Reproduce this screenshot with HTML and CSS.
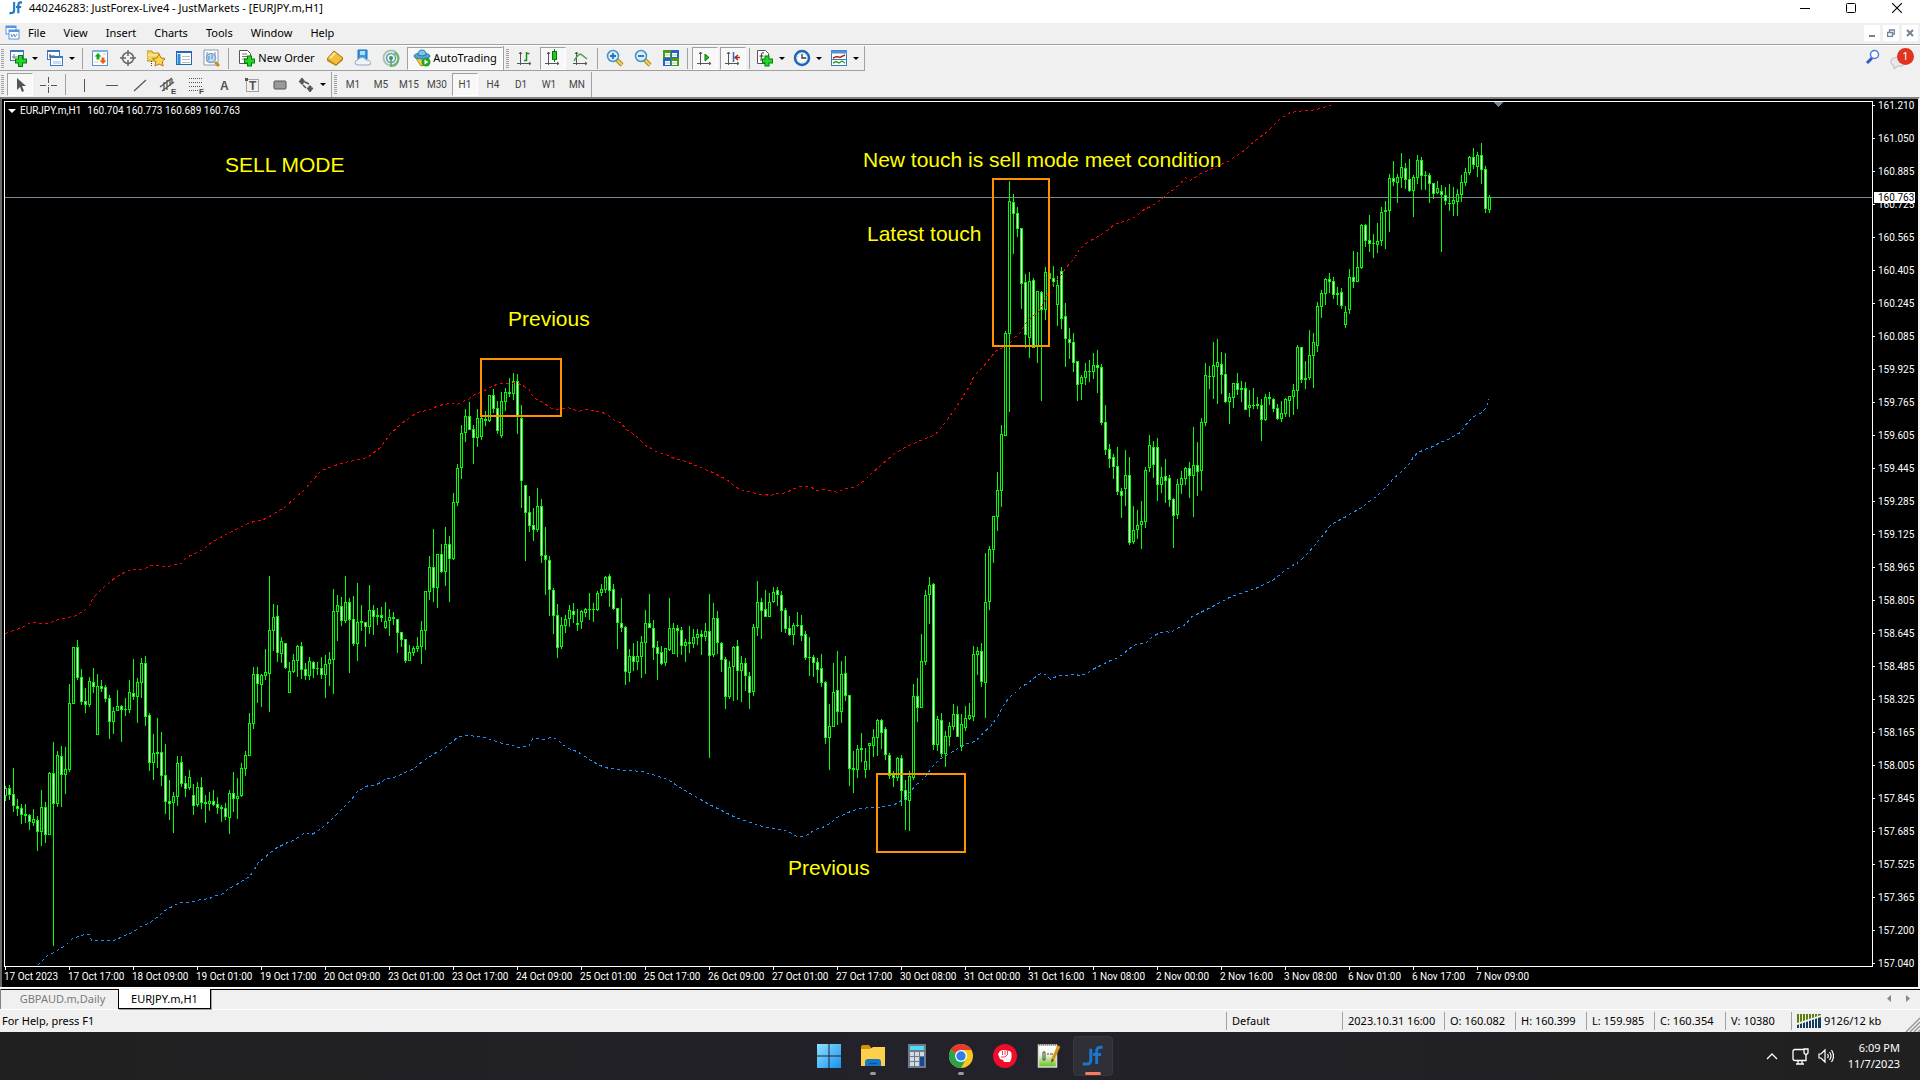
FILE: index.html
```html
<!DOCTYPE html>
<html lang="en">
<head>
<meta charset="utf-8">
<title>440246283: JustForex-Live4 - JustMarkets - [EURJPY.m,H1]</title>
<link rel="stylesheet" href="styles.css">
</head>
<body>
<header class="titlebar">
  <svg class="logo" width="14" height="14" viewBox="0 0 30 28"><path d="M11 1v18q0 6-6 6H1M28 2h-3q-5 0-5 6v17M15 12h11" fill="none" stroke="#1d78c8" stroke-width="4.5"/></svg>
  <h1>440246283: JustForex-Live4 - JustMarkets - [EURJPY.m,H1]</h1>
  <div class="window-controls">
    <button aria-label="Minimize"><svg width="10" height="10"><path d="M0 5.5h10" stroke="#000"/></svg></button>
    <button aria-label="Maximize"><svg width="10" height="10"><rect x=".5" y=".5" width="9" height="9" fill="none" stroke="#000" rx="1"/></svg></button>
    <button aria-label="Close"><svg width="10" height="10"><path d="M0 0l10 10M10 0L0 10" stroke="#000" stroke-width="1.1"/></svg></button>
  </div>
</header>

<nav class="menubar">
  <svg class="menu-icon" width="15" height="15"><rect x="1" y="1" width="10" height="8" fill="#fff" stroke="#5b93dc"/><rect x="4" y="5" width="10" height="9" fill="#fff" stroke="#5b93dc"/><path d="M1 2h10M4 6h10" stroke="#5b93dc" stroke-width="2"/><path d="M6 9l1 3 2-3 1 3 2-3" fill="none" stroke="#5b93dc"/></svg>
  <button>File</button><button>View</button><button>Insert</button><button>Charts</button><button>Tools</button><button>Window</button><button>Help</button>
  <div class="mdi-controls">
    <button aria-label="Minimize chart"><svg width="8" height="8"><path d="M1 7h6" stroke="#70839a" stroke-width="2"/></svg></button>
    <button aria-label="Restore chart"><svg width="8" height="8"><path d="M2.500 3V1H7.500V5H6M0 3.500H5.500V7.500H.5V3" fill="none" stroke="#70839a" stroke-width="1.400"/></svg></button>
    <button aria-label="Close chart"><svg width="8" height="8"><path d="M1 1l6 6M7 1L1 7" stroke="#70839a" stroke-width="2"/></svg></button>
  </div>
</nav>

<div class="toolbar">
  <div class="bar-group">
    <i class="grip"></i>
    <button class="tool drop" aria-label="New chart"><svg width="18" height="18"><rect x="1.500" y="1.500" width="13" height="10" fill="#fff" stroke="#3b78c0"/><path d="M1 2h14" stroke="#3b78c0" stroke-width="2"/><path d="M5 5v5M3 8h8M10 6v4" stroke="#777"/><path d="M11.500 6v12M6 12h12" stroke="#087a0a" stroke-width="5"/><path d="M11.500 7v10M7 12h10" stroke="#21d727" stroke-width="3"/></svg><i class="arrow"></i></button>
    <button class="tool drop" aria-label="Profiles"><svg width="18" height="18"><rect x="1.500" y="1.500" width="12" height="9" fill="#fff" stroke="#3b78c0"/><path d="M1 2h13" stroke="#3b78c0" stroke-width="2"/><path d="M4 5v4M3 7h6" stroke="#555"/><rect x="4.500" y="7.500" width="12" height="9" fill="#fff" stroke="#3b78c0"/><path d="M4 8h13" stroke="#3b78c0" stroke-width="2"/><rect x="7" y="12" width="8" height="3" fill="#c4dcf5"/></svg><i class="arrow"></i></button>
    <i class="sep"></i>
    <button class="tool" aria-label="Market Watch"><svg width="18" height="18"><rect x="1.500" y="1.500" width="15" height="15" fill="#fff" stroke="#5b93cb"/><path d="M1 2h16" stroke="#7fb2e6" stroke-width="2"/><path d="M7 4l3.500 3.500H8.500v3H5.500v-3H3.500z" fill="#17a91c"/><path d="M12 15l-3.500-3.500h2v-3h3v3h2z" fill="#f05a14"/><path d="M12 5h3M3 13h4" stroke="#ccc"/></svg></button>
    <button class="tool" aria-label="Data Window"><svg width="18" height="18"><circle cx="9" cy="9" r="5.500" fill="none" stroke="#666" stroke-width="1.500"/><path d="M9 1v6M9 11v6M1 9h6M11 9h6" stroke="#666" stroke-width="1.500"/></svg></button>
    <button class="tool" aria-label="Navigator"><svg width="18" height="18"><path d="M0 2h5l1 2h6v8H0z" fill="#f6d35b" stroke="#b89226"/><path d="M1 6h11" stroke="#fff3b5"/><path d="M4.500 12v5" stroke="#444" stroke-dasharray="1 1"/><path d="M12 5l2 4 4.500.5-3.300 3 1 4.500L12 15l-4 2 .8-4.500-3.300-3L10 9z" fill="#ffd64a" stroke="#b37a12"/></svg></button>
    <button class="tool" aria-label="Terminal"><svg width="18" height="18"><rect x="1.500" y="2.500" width="15" height="13" fill="#fff" stroke="#1f69b5"/><path d="M1 3h16" stroke="#1f69b5" stroke-width="2"/><path d="M4 5v10" stroke="#2f8bdc" stroke-width="3"/><path d="M7 7.500h8M7 10.500h8M7 13.500h8" stroke="#bbb"/></svg></button>
    <button class="tool" aria-label="Strategy Tester"><svg width="18" height="18"><path d="M1 1h14v15H1z" fill="#fff" stroke="#8b9aab"/><path d="M4 3v10M12 3v5" stroke="#888"/><circle cx="8" cy="9" r="4.500" fill="#c4def4" stroke="#78a5cf" stroke-width="1.500"/><path d="M6 7v4M9 6v4" stroke="#5683b0"/><path d="M12 13l4 4" stroke="#c4921e" stroke-width="3"/></svg></button>
    <i class="sep"></i>
    <button class="tool wide-order"><svg width="18" height="18"><path d="M1.500 1.500h8l3 3v10h-11z" fill="#fff" stroke="#555"/><path d="M4 5h5M4 7.500h6M4 10h6" stroke="#777"/><path d="M11.500 6.500v11M6 12h11" stroke="#087a0a" stroke-width="5"/><path d="M11.500 7.500v9M7 12h9" stroke="#21d727" stroke-width="3"/></svg><span>New Order</span></button>
    <button class="tool" aria-label="MetaEditor"><svg width="18" height="18"><path d="M1 10l7-8 9 7-7 7z" fill="#f2c03d" stroke="#9c6d0a"/><path d="M1 10l9 6 7-7v2l-7 6-9-5z" fill="#c68916"/><path d="M4 9l5-5" stroke="#ffe79b" stroke-width="2"/></svg></button>
    <button class="tool" aria-label="Cloud"><svg width="18" height="18"><path d="M4 1h9v9H4z" fill="#3098e8" stroke="#1d6fb6"/><path d="M6 3h5M6 5h5" stroke="#e3f2ff" stroke-width="1.500"/><path d="M4 16q-3 0-3-2.500T4 11q1-3 4.500-2.500T12 11q4-.5 4.500 2.500T14 16z" fill="#eef3fa" stroke="#94a8c2"/></svg></button>
    <button class="tool" aria-label="Signals"><svg width="18" height="18" fill="none"><circle cx="9" cy="9" r="7.500" stroke="#a9c5b2" stroke-width="2"/><circle cx="9" cy="9" r="4.500" stroke="#5f9ec9" stroke-width="1.500"/><path d="M9 9v8q7 0 7.500-8-1-4-4-5.500" stroke="#6bb36b" stroke-width="2"/><circle cx="9" cy="9" r="2" fill="#3d9b46"/></svg></button>
    <button class="tool wide-auto pressed"><svg width="18" height="18"><path d="M2 8l6 9 6-2 2-7z" fill="#f5cc3d" stroke="#b18a1b"/><ellipse cx="9" cy="7" rx="8" ry="3" fill="#4da7dd" stroke="#2a79ad"/><path d="M5 6q0-5 4-5t4 5q-4 2-8 0" fill="#7cc4ee" stroke="#2a79ad"/><circle cx="13" cy="13" r="4.500" fill="#25a428"/><path d="M11.500 10.500l4 2.500-4 2.500z" fill="#fff"/></svg><span>AutoTrading</span></button>
  </div>
  <div class="bar-group">
    <i class="grip"></i>
    <button class="tool" aria-label="Bar chart"><svg width="18" height="18" fill="none"><path d="M4.500 3v13M1 14.500h14M3 5l1.500-2L6 5M13 13l2 1.500-2 1.500" stroke="#555"/><path d="M10.500 3v9M10.500 4.500h3M8 11.500h2.500" stroke="#129317" stroke-width="1.500"/></svg></button>
    <button class="tool pressed" aria-label="Candlesticks"><svg width="18" height="18"><path d="M4.500 3v13M1 14.500h14M3 5l1.500-2L6 5M13 13l2 1.500-2 1.500" stroke="#555" fill="none"/><path d="M10.500 0v13" stroke="#087a0a"/><rect x="8.500" y="2.500" width="4" height="8" fill="#21c727" stroke="#087a0a"/></svg></button>
    <button class="tool" aria-label="Line chart"><svg width="18" height="18" fill="none"><path d="M4.500 3v13M1 14.500h14M3 5l1.500-2L6 5M13 13l2 1.500-2 1.500" stroke="#555"/><path d="M2 12q5-9 8-6l5 4" stroke="#42a047" stroke-width="1.500"/></svg></button>
    <i class="sep"></i>
    <button class="tool" aria-label="Zoom in"><svg width="18" height="18"><path d="M11 11l5 5" stroke="#8c6a12" stroke-width="4"/><path d="M11 11l5 5" stroke="#f5cf48" stroke-width="2.500"/><circle cx="7" cy="7" r="5.500" fill="#d8edfb" stroke="#4a8fc7" stroke-width="1.500"/><path d="M7 4v6M4 7h6" stroke="#2272b4" stroke-width="1.800"/></svg></button>
    <button class="tool" aria-label="Zoom out"><svg width="18" height="18"><path d="M11 11l5 5" stroke="#8c6a12" stroke-width="4"/><path d="M11 11l5 5" stroke="#f5cf48" stroke-width="2.500"/><circle cx="7" cy="7" r="5.500" fill="#d8edfb" stroke="#4a8fc7" stroke-width="1.500"/><path d="M4 7h6" stroke="#2272b4" stroke-width="1.800"/></svg></button>
    <button class="tool" aria-label="Tile windows"><svg width="18" height="18"><path d="M1 1h8v8H1zM9 9h8v8H9z" fill="#4a9b1d"/><path d="M9 1h8v8H9zM1 9h8v8H1z" fill="#2763c4"/><path d="M3 4h5v4H3zM10 4h5v4h-5zM3 12h5v4H3zM10 12h5v4h-5z" fill="#fff"/><path d="M3 6h5M10 6h5M3 14h5M10 14h5" stroke="#aac8a0"/></svg></button>
    <i class="sep"></i>
    <button class="tool pressed" aria-label="Auto scroll"><svg width="18" height="18" fill="none"><path d="M4.500 3v13M1 14.500h14M3 5l1.500-2L6 5M13 13l2 1.500-2 1.500" stroke="#555"/><path d="M9 5l4 3.500L9 12z" fill="#22b828" stroke="#087a0a"/></svg></button>
    <button class="tool pressed" aria-label="Chart shift"><svg width="18" height="18" fill="none"><path d="M4.500 3v13M1 14.500h14M3 5l1.500-2L6 5M13 13l2 1.500-2 1.500" stroke="#555"/><path d="M9.500 3v10" stroke="#2272b4" stroke-width="1.500"/><path d="M16 8.500h-4M14 6l-3 2.500 3 2.500" stroke="#a5340e" stroke-width="1.500"/></svg></button>
    <i class="sep"></i>
    <button class="tool drop" aria-label="Indicators"><svg width="18" height="18"><path d="M1.500 1.500h8l3 3v10h-11z" fill="#fff" stroke="#555"/><path d="M8 4q-2-1-2.500 1L5 12M3.500 7h4" stroke="#333" fill="none"/><path d="M11 6.500v11M6 12h11" stroke="#087a0a" stroke-width="5"/><path d="M11 7.500v9M7 12h9" stroke="#21d727" stroke-width="3"/></svg><i class="arrow"></i></button>
    <button class="tool drop" aria-label="Periods"><svg width="18" height="18"><circle cx="9" cy="9" r="7" fill="#eaf4fc" stroke="#1d66b8" stroke-width="2.500"/><circle cx="9" cy="9" r="4.500" fill="#fff" stroke="#bbb" stroke-dasharray="1 2"/><path d="M9 5v4h4" fill="none" stroke="#333" stroke-width="1.300"/></svg><i class="arrow"></i></button>
    <button class="tool drop" aria-label="Templates"><svg width="18" height="18"><rect x="1.500" y="1.500" width="15" height="15" fill="#fff" stroke="#3b78b8"/><path d="M1 3h16" stroke="#4d93d6" stroke-width="3"/><path d="M3 9l4-1.500 3 1 5-2.500" fill="none" stroke="#a5340e" stroke-width="1.400"/><path d="M2 10.500h14" stroke="#3b78b8"/><path d="M3 14l3-1.500 3 1.500 3-2 3 2" fill="none" stroke="#2e9a34" stroke-width="1.400"/></svg><i class="arrow"></i></button>
  </div>
  <div class="bar-right">
    <button aria-label="Search"><svg width="16" height="16"><path d="M2 14l5-5" stroke="#2c5fc4" stroke-width="3"/><circle cx="9.500" cy="5.500" r="4" fill="#fff" stroke="#4a7be0" stroke-width="1.500"/></svg></button>
    <button class="chat" aria-label="Messages"><svg width="20" height="16"><path d="M2 6q5-4 12 0 3 4-2 7H8l-4 3v-3Q-1 10 2 6" fill="#e6e8ee" stroke="#b8bbc4"/></svg><span class="badge">1</span></button>
  </div>
</div>

<div class="toolbar second">
  <div class="bar-group">
    <i class="grip"></i>
    <button class="tool pressed" aria-label="Cursor"><svg width="18" height="18"><path d="M6 2v12l3-3 2 5 2-1-2-5h4z" fill="#555"/></svg></button>
    <button class="tool" aria-label="Crosshair"><svg width="18" height="18"><path d="M9.500 1v6M9.500 11v6M1 9.500h6M12 9.500h6" stroke="#555"/><path d="M9 9.500h1" stroke="#555"/></svg></button>
    <i class="sep wide"></i>
    <button class="tool" aria-label="Vertical line"><svg width="18" height="18"><path d="M9.500 3v13" stroke="#555"/></svg></button>
    <button class="tool" aria-label="Horizontal line"><svg width="18" height="18"><path d="M3 9.500h12" stroke="#555"/></svg></button>
    <button class="tool" aria-label="Trendline"><svg width="18" height="18"><path d="M3 15L15 4" stroke="#555" stroke-width="1.200"/></svg></button>
    <button class="tool" aria-label="Equidistant channel"><svg width="18" height="18"><path d="M1 11L13 2M3 15L15 6M5 6v9M8 4v10M11 4v6M13 3v4" stroke="#555" stroke-width="1.300"/><text x="12" y="18" class="icon-letter">E</text></svg></button>
    <button class="tool" aria-label="Fibonacci retracement"><svg width="18" height="18"><path d="M2 2.500h14M2 6.500h14M2 10.500h14M2 14.500h9" stroke="#555" stroke-dasharray="1 1"/><text x="12" y="18" class="icon-letter">F</text></svg></button>
    <button class="tool" aria-label="Text"><svg width="18" height="18"><text x="5" y="14" class="icon-text">A</text></svg></button>
    <button class="tool" aria-label="Text label"><svg width="18" height="18"><rect x="3.500" y="3.500" width="12" height="12" fill="none" stroke="#555" stroke-dasharray="1 1"/><path d="M2 2h3v3H2z" fill="#555"/><text x="6" y="14" class="icon-text">T</text></svg></button>
    <button class="tool" aria-label="Rectangle"><svg width="18" height="18"><rect x="3" y="5" width="12" height="8" rx="1" fill="#999" stroke="#555"/></svg></button>
    <button class="tool drop" aria-label="Arrows"><svg width="18" height="18"><path d="M2 6l3-4 3 4H6v2H4V6zM10 12h2v-2h2v2h2l-3 4z" fill="#555" stroke="#555"/><path d="M6 9l3 3M8 6l4 2" stroke="#555" stroke-width="1.500"/></svg><i class="arrow"></i></button>
  </div>
  <div class="bar-group periods">
    <i class="grip"></i>
    <button class="tool">M1</button><button class="tool">M5</button><button class="tool">M15</button><button class="tool">M30</button><button class="tool pressed">H1</button><button class="tool">H4</button><button class="tool">D1</button><button class="tool">W1</button><button class="tool">MN</button>
  </div>
</div>

<main class="chart">
  <section class="plot">
    <svg class="canvas">
      <g class="pixel">
        <path d="M0 95.500h4000" stroke="#778899"/>
        <path id="bars" fill="#00ff00"/>
        <path id="bull" fill="#000"/>
        <path id="bear" fill="#fff"/>
        <polyline id="upper" class="band" stroke="#ff0000"/>
        <polyline id="lower" class="band" stroke="#1e90ff"/>
        <path d="M1488 0h10l-5 5z" fill="#778899"/>
      </g>
      <g class="boxes">
        <rect x="476" y="257" width="80" height="57"/>
        <rect x="872" y="672" width="88" height="78"/>
        <rect x="988" y="77" width="56" height="167"/>
      </g>
      <g class="notes">
        <text x="220" y="70">SELL MODE</text>
        <text x="503" y="224">Previous</text>
        <text x="783" y="773">Previous</text>
        <text x="858" y="65">New touch is sell mode meet condition</text>
        <text x="862" y="139">Latest touch</text>
      </g>
    </svg>
    <p class="quote"><i></i><span>EURJPY.m,H1</span><span>160.704 160.773 160.689 160.763</span></p>
  </section>
  <aside class="price-axis">
    <ul>
      <li>161.210</li><li>161.050</li><li>160.885</li><li>160.725</li><li>160.565</li><li>160.405</li><li>160.245</li><li>160.085</li><li>159.925</li><li>159.765</li><li>159.605</li><li>159.445</li><li>159.285</li><li>159.125</li><li>158.965</li><li>158.805</li><li>158.645</li><li>158.485</li><li>158.325</li><li>158.165</li><li>158.005</li><li>157.845</li><li>157.685</li><li>157.525</li><li>157.365</li><li>157.200</li><li>157.040</li>
    </ul>
    <span class="last-price">160.763</span>
  </aside>
  <ul class="time-axis">
    <li>17 Oct 2023</li><li>17 Oct 17:00</li><li>18 Oct 09:00</li><li>19 Oct 01:00</li><li>19 Oct 17:00</li><li>20 Oct 09:00</li><li>23 Oct 01:00</li><li>23 Oct 17:00</li><li>24 Oct 09:00</li><li>25 Oct 01:00</li><li>25 Oct 17:00</li><li>26 Oct 09:00</li><li>27 Oct 01:00</li><li>27 Oct 17:00</li><li>30 Oct 08:00</li><li>31 Oct 00:00</li><li>31 Oct 16:00</li><li>1 Nov 08:00</li><li>2 Nov 00:00</li><li>2 Nov 16:00</li><li>3 Nov 08:00</li><li>6 Nov 01:00</li><li>6 Nov 17:00</li><li>7 Nov 09:00</li>
  </ul>
</main>

<div class="tabs">
  <button class="tab">GBPAUD.m,Daily</button>
  <button class="tab active">EURJPY.m,H1</button>
  <div class="tab-scroll"><button aria-label="Previous tabs"><svg width="4" height="7"><path d="M4 0v7L0 3.500z" fill="#888"/></svg></button><button aria-label="Next tabs"><svg width="4" height="7"><path d="M0 0v7l4-3.500z" fill="#888"/></svg></button></div>
</div>

<footer class="status">
  <span class="help">For Help, press F1</span>
  <span class="cell profile">Default</span>
  <span class="cell time">2023.10.31 16:00</span>
  <span class="cell ohlc">O: 160.082</span>
  <span class="cell ohlc">H: 160.399</span>
  <span class="cell ohlc low">L: 159.985</span>
  <span class="cell ohlc">C: 160.354</span>
  <span class="cell volume">V: 10380</span>
  <span class="cell traffic"><svg width="24" height="14"><path d="M0 0h24v1L0 9z" fill="#5f7d0c"/><path d="M0 14v-3L24 3v11z" fill="#123d5c"/><path d="M2.500 0v14M5.500 0v14M8.500 0v14M11.500 0v14M14.500 0v14M17.500 0v14M20.500 0v14" stroke="#f0f0f0"/></svg>9126/12 kb</span>
  <svg class="resize" width="15" height="15"><path d="M1 15L15 1M5 15L15 5M9 15l6-6M13 15l2-2" stroke="#999" stroke-width="1.500"/></svg>
</footer>

<div class="taskbar">
  <div class="apps">
    <button aria-label="Start"><svg width="24" height="24"><defs><linearGradient id="win" x2="1" y2="1"><stop stop-color="#8fe0ff"/><stop offset="1" stop-color="#1593f2"/></linearGradient></defs><path d="M0 0h11.500v11.500H0zM12.500 0H24v11.500H12.500zM0 12.500h11.500V24H0zM12.500 12.500H24V24H12.500z" fill="url(#win)"/></svg></button>
    <button class="running" aria-label="File Explorer"><svg width="24" height="24"><path d="M0 3q0-2 2-2h6l3 4H0z" fill="#d98f05"/><path d="M0 5h9l3-2h12v19H0z" fill="#ffcf4b"/><path d="M4 22v-4q0-3 3-3h10q3 0 3 3v4z" fill="#1478c8"/><path d="M8 19.500h8" stroke="#0b559a" stroke-width="1.500"/></svg></button>
    <button aria-label="Calculator"><svg width="24" height="24"><path d="M3 0h18v24H3z" fill="#6c7c8a"/><path d="M5 2h14v4H5z" fill="#4fdcf5"/><path d="M5 8h4v4H5zM10 8h4v4h-4zM15 8h4v4h-4zM5 13h4v4H5zM10 13h4v4h-4zM5 18h4v4H5zM10 18h4v4h-4z" fill="#d3dae1"/><path d="M15 13h4v9h-4z" fill="#124c93"/></svg></button>
    <button class="running" aria-label="Chrome"><svg width="24" height="24"><circle cx="12" cy="12" r="12" fill="#f8c81c"/><path d="M12 12L1.600 6A12 12 0 0 1 22.400 6z" fill="#e33b2e"/><path d="M12 12L1.600 6A12 12 0 0 0 12 24l5-9z" fill="#2ca24c"/><path d="M12 6h10.400L17 15z" fill="#f8c81c"/><circle cx="12" cy="12" r="6" fill="#fff"/><circle cx="12" cy="12" r="4.700" fill="#2f7de9"/></svg></button>
    <button aria-label="Recorder"><svg width="24" height="24"><circle cx="12" cy="12" r="12" fill="#f00c2c"/><path d="M5 10l2-3 3-1 7 1 1.500 2v5L17 18h-6l-1-2-3-1z" fill="#fff"/><path d="M9.500 7v4M12 7v4M14.500 7v4M8 13h4l2-2" stroke="#f00c2c" stroke-width=".8" fill="none"/></svg></button>
    <button aria-label="Notepad"><svg width="24" height="24"><defs><linearGradient id="pad" x2="0" y2="1"><stop stop-color="#fff"/><stop offset=".4" stop-color="#f4fbe8"/><stop offset="1" stop-color="#62c21d"/></linearGradient></defs><path d="M1.500 1h18v22h-18z" fill="url(#pad)" stroke="#d8dcd4" stroke-width="1.500"/><path d="M2 1h18" stroke="#555" stroke-dasharray="1 1"/><path d="M6 8v8M6 8h2v8H6M10 10h2M13 10h3" stroke="#444" fill="none"/><path d="M22 2l-7 15" stroke="#d6931d" stroke-width="3"/><path d="M15 15l-1 4 3-3z" fill="#654012"/></svg></button>
    <button class="active" aria-label="JustMarkets"><svg width="22" height="22" viewBox="0 0 30 28"><path d="M12 4v15q0 6-6 6H1M28 2h-3q-5 0-5 6v17M15 12h11" fill="none" stroke="#1877cf" stroke-width="4"/></svg></button>
  </div>
  <div class="tray">
    <button aria-label="Hidden icons"><svg width="12" height="7"><path d="M1 6l5-5 5 5" fill="none" stroke="#fff" stroke-width="1.300"/></svg></button>
    <button aria-label="Network"><svg width="18" height="17" fill="none" stroke="#fff" stroke-width="1.300"><path d="M12 1.500H3q-2 0-2 2v7q0 2 2 2h11V7M4 16h8M6 13v3M10 13v3M12 1h4v4l-2 2-2-2z"/></svg></button>
    <button aria-label="Volume"><svg width="16" height="16" fill="none" stroke="#fff" stroke-width="1.200"><path d="M1 6h2l4-4v12L3 10H1zM9.500 6q1.500 2 0 4M11.500 4q3 4 0 8M13.500 2q4 6 0 12"/></svg></button>
    <p class="clock"><span>6:09 PM</span><span>11/7/2023</span></p>
  </div>
</div>
<script src="chart.js"></script>
</body>
</html>
```

FILE: styles.css
```css
* { box-sizing: border-box; }
body { margin: 0; height: 100vh; display: flex; flex-direction: column; overflow: hidden; background: #f0f0f0; color: #000; font: 11px/16px "Noto Sans", "Open Sans", sans-serif; }
button { border: 0; padding: 0; margin: 0; background: none; font: inherit; color: inherit; display: flex; align-items: center; justify-content: center; flex: none; }
svg { display: block; flex: none; }
ul, p, h1 { margin: 0; padding: 0; list-style: none; }

.titlebar { height: 23px; flex: none; background: #fff; display: flex; align-items: center; padding-bottom: 8px; }
.logo { margin-left: 9px; }
.titlebar h1 { margin-left: 6px; font-size: 11px; font-weight: 400; white-space: nowrap; }
.window-controls { margin-left: auto; display: flex; }
.window-controls button { width: 46px; height: 15px; }

.menubar { height: 22px; flex: none; display: flex; align-items: center; padding: 0 2px 2px 5px; border-bottom: 1px solid #a0a0a0; }
.menubar > button { padding: 0 9px; }
.menu-icon { margin-right: -1px; }
.mdi-controls { margin-left: auto; display: flex; gap: 3px; }
.mdi-controls button { width: 16px; height: 16px; background: #fff; }

.toolbar { height: 26px; flex: none; display: flex; align-items: stretch; border-top: 1px solid #fff; }
.bar-group { display: flex; align-items: center; border-right: 1px solid #a0a0a0; border-bottom: 1px solid #a0a0a0; }
.bar-group + .bar-group { padding-left: 1px; }
.second { border-top-color: #f0f0f0; }
.second .bar-group { border-bottom: 0; }
.grip { width: 4px; height: 19px; margin: 0 1px; flex: none; background: repeating-linear-gradient(#a0a0a0 0 1px, #f0f0f0 1px 2px); border-right: 1px solid #f0f0f0; }
.tool { width: 28px; height: 23px; }
.drop { width: 37px; gap: 5px; padding-right: 2px; }
.arrow { width: 0; border: 3px solid transparent; border-top-color: #000; border-bottom: 0; }
.pressed { background: #f8f8f8; border: 1px solid #a0a0a0; border-right-color: #fff; border-bottom-color: #fff; width: 26px; margin: 0 1px; }
.sep { width: 1px; height: 21px; margin: 0 3px 0 2px; background: #a0a0a0; flex: none; }
.sep.wide { margin: 0 4px 0 3px; }
.wide-order { width: 89px; gap: 2px; }
.wide-auto { width: 96px; margin: 0 0 0 2px; gap: 2px; }
.periods { font: 10px/12px Roboto, sans-serif; color: #444; }
.icon-letter { font: 700 8px "Liberation Sans", sans-serif; fill: #444; }
.icon-text { font: 700 12px "Liberation Sans", sans-serif; fill: #555; }
.bar-right { margin-left: auto; display: flex; align-items: flex-start; gap: 9px; padding: 3px 6px 0 0; }
.chat { position: relative; width: 24px; height: 20px; align-items: flex-end; justify-content: flex-start; }
.badge { position: absolute; right: 0; top: -1px; width: 17px; height: 17px; border-radius: 50%; background: #e03420; color: #fff; line-height: 16px; }

.chart { flex: 1; min-height: 0; background: #000; color: #fff; border: solid #696969; border-width: 2px 2px 0 2px; border-top-color: #808080; border-right-color: #f0f0f0; display: grid; grid-template: minmax(0, 1fr) 20px / minmax(0, 1fr) 45px; padding-left: 2px; font: 10px/13px Roboto, "Liberation Sans", sans-serif; }
.plot { position: relative; margin-top: 2px; border: 1px solid #fff; }
.canvas { width: 100%; height: 100%; overflow: hidden; position: absolute; inset: 0; }
.pixel { shape-rendering: crispEdges; }
.band { fill: none; stroke-dasharray: 3 3; }
.boxes rect { fill: none; stroke: #ff9000; stroke-width: 2; }
.notes { font: 21px "Liberation Sans", sans-serif; fill: #ffff00; }
.quote { position: relative; display: flex; align-items: center; gap: 6px; padding: 2px 3px; }
.quote i { border: 4px solid transparent; border-top-color: #fff; border-bottom: 0; }
.quote i + span { margin-left: -2px; }
.price-axis { position: relative; }
.price-axis li { height: 33px; display: flex; align-items: flex-start; }
.price-axis li:last-child { height: 13px; }
.price-axis li::before { content: ""; width: 2px; height: 1px; margin: 6px 3px 0 0; background: #fff; }
.last-price { position: absolute; left: 1px; top: 93px; width: 41px; line-height: 11px; padding-left: 4px; background: #fff; color: #000; }
.time-axis { grid-column: 1 / 3; display: flex; }
.time-axis li { width: 64px; flex: none; white-space: nowrap; }
.time-axis li::before { content: ""; display: block; width: 1px; height: 3px; margin-left: 1px; background: #fff; }

.tabs { height: 23px; flex: none; display: flex; align-items: flex-start; border-top: 1px solid #fff; border-bottom: 1px solid #fff; padding-bottom: 1px; background: linear-gradient(#f0f0f0 1px, #000 1px 2px, #f0f0f0 2px); }
.tab { height: 20px; width: 118px; margin-top: 1px; padding-left: 6px; color: #7a7a7a; border-left: 1px solid #808080; font-size: 12px; font-family: "Open Sans", sans-serif; }
.tab.active { width: 93px; padding: 0; background: #fff; color: #000; border: 1px solid #000; border-top: 0; box-shadow: 1px 1px #a0a0a0; }
.tab, .tab.active { font-size: 11px; font-family: "Noto Sans", sans-serif; }
.tab-scroll { margin-left: auto; display: flex; gap: 15px; padding: 7px 10px 0 0; }

.status { height: 22px; flex: none; display: flex; align-items: center; position: relative; white-space: nowrap; }
.help { flex: 1; padding-left: 2px; }
.cell { height: 18px; line-height: 18px; padding-left: 5px; border-left: 1px solid #a0a0a0; flex: none; }
.profile { width: 116px; }
.time { width: 102px; }
.ohlc { width: 71px; }
.ohlc.low { width: 68px; }
.volume { width: 66px; }
.traffic { width: 129px; display: flex; align-items: center; gap: 3px; }
.resize { position: absolute; right: 0; bottom: 0; }

.taskbar { height: 48px; flex: none; display: grid; grid-template-columns: 1fr auto 1fr; background: linear-gradient(90deg, #202020, #23222a 45%, #23222a 55%, #202020); color: #fff; }
.apps { grid-column: 2; display: flex; align-items: center; gap: 4px; padding-left: 2px; }
.apps button { width: 40px; height: 40px; position: relative; border-radius: 4px; }
.apps .active { background: #2f2f37; border: 1px solid #38383f; }
.apps .running::after, .apps .active::after { content: ""; position: absolute; bottom: 1px; left: 17px; width: 6px; height: 3px; border-radius: 2px; background: #9a9a9e; }
.apps .active::after { left: 11px; bottom: 0; width: 16px; background: #f47c62; }
.tray { display: flex; align-items: center; justify-content: flex-end; gap: 8px; padding-right: 20px; }
.tray button:first-child { margin-right: 6px; }
.clock { text-align: right; margin-left: 6px; }
.clock span { display: block; }
```

FILE: chart.js
```js
// Bars are 4px apart. Each entry holds high, body top, body bottom, low
// in thirds of a pixel below the segment's base, then u (up) or d (down).
const BAR_STEP = 4;
const UNITS = 3;
const segments = [
  { base: 438, bars: `738,744,768,783,u 735,743,765,780,d 684,762,798,816,d 777,798,806,828,d 792,804,825,852,d 792,822,827,849,d 822,825,846,870,d 807,837,850,858,u 828,840,876,933,d 750,801,876,918,u
786,801,885,909,d 696,699,885,885,u 606,699,792,1218,d 633,645,792,801,u 618,648,705,801,d 621,687,705,762,u 432,489,690,696,u 321,321,492,492,u 300,321,414,420,d 387,411,486,495,d
444,483,495,519,d 411,423,495,501,u 384,426,441,459,d 402,438,585,585,u 420,438,447,456,d 435,441,477,486,d 465,474,546,597,d 501,513,546,582,u 450,498,513,513,u 495,498,510,606,d
474,507,510,528,d 420,456,510,519,u 357,459,471,480,d 414,426,471,549,u 354,369,429,474,u 348,369,531,558,d 519,525,669,693,d 582,639,669,720,u 534,636,642,684,d 576,636,708,738,d
612,705,786,822,d 720,783,792,840,d 756,768,789,879,u 648,669,771,798,u 648,666,732,741,d 708,729,747,771,d 690,711,744,750,u 732,765,798,825,d 726,741,795,801,u 711,741,789,807,d
765,786,792,849,d 756,783,792,813,u 750,783,795,798,d 771,792,804,822,d 795,801,807,846,d 789,804,831,840,d 750,759,834,882,u 696,759,777,816,d 714,768,777,837,u 669,684,768,771,u
633,645,687,708,u 519,549,648,648,u 381,402,552,567,u 381,402,432,489,d 402,405,435,501,u 327,396,408,420,u 108,270,402,516,u 192,231,273,333,u 195,228,339,366,d 291,303,342,369,u
309,309,384,387,d 366,393,459,459,u 342,360,396,399,u 315,318,363,411,u 306,318,390,417,d 369,387,408,420,d 351,363,408,420,u 363,366,387,414,d 366,384,387,405,d 351,384,405,417,d
345,372,405,474,u 336,357,372,438,u 147,213,360,462,u 165,195,216,303,u 171,198,243,258,d 108,186,243,249,u 174,186,240,399,d 168,237,312,318,d 129,246,312,363,u 195,243,249,273,d
246,246,261,321,d 135,210,261,282,u 195,210,231,285,d 204,225,231,255,d 201,225,234,246,d 186,243,264,267,u 207,231,243,288,u 216,231,237,255,d 237,237,279,339,d 276,276,300,321,d
297,297,363,369,d 315,336,363,363,u 318,324,339,348,u 291,318,327,336,u 243,270,321,372,u 153,153,273,330,u` },
  { base: 238, bars: `648,681,756,780,u 567,681,744,786,d 642,642,744,804,u 612,642,696,699,d 561,612,696,738,u 588,612,657,786,d 459,486,657,660,u 372,384,489,498,u 255,279,384,417,u 207,228,279,306,u
186,228,270,270,d 255,267,294,372,d 207,234,294,321,u 225,234,291,300,u 213,237,243,258,d 165,165,243,246,u 147,165,207,219,d 183,204,273,282,d 156,183,288,294,u 144,156,186,213,u
114,156,162,171,d 99,123,162,180,u 102,123,231,282,d 195,234,423,504,d 435,435,519,663,d 468,516,558,576,d 504,555,570,603,d 444,498,570,576,u 477,498,648,669,d 561,645,660,765,d
648,660,750,828,d 744,750,828,882,d 792,825,924,954,d 831,855,921,927,u 825,837,858,879,u 795,810,837,861,u 789,813,825,849,d 807,849,855,873,d 810,813,846,867,u 804,807,819,831,u
759,807,810,840,d 789,807,810,846,d 753,759,810,813,u 732,747,759,768,u 708,711,750,759,u 702,708,753,801,d 732,747,807,810,d 804,804,849,927,d 774,849,864,876,d 858,861,996,1035,d
927,948,999,1026,u 909,948,966,993,d 903,948,966,990,u 888,906,951,1014,u 810,849,909,1002,u 762,849,864,864,d 840,864,924,960,d 903,921,942,1020,d 918,936,972,975,d 924,924,969,978,u
774,864,930,933,u 849,864,942,942,u 855,864,873,951,d 861,870,918,945,d 897,906,918,966,u 858,906,912,939,d 867,891,912,924,u 867,882,894,915,u 870,882,891,945,d 849,873,891,903,u
762,873,948,1254,d 789,834,945,951,u 813,834,909,942,d 906,909,960,996,d 951,957,1071,1107,d 963,981,1071,1077,u 918,921,981,1083,u 900,918,993,1080,d 948,969,993,1086,u 954,969,1008,1053,d
996,1008,1059,1107,d 852,861,1056,1068,u 723,786,864,888,u 774,786,813,897,d 750,807,831,831,d 759,786,831,831,u 741,756,786,789,u 741,750,766,798,d 753,765,813,876,d 804,810,867,879,d
828,864,885,888,d 849,855,885,915,u 816,855,858,861,d 825,855,888,903,d 873,882,954,960,d 891,951,954,1008,d 945,951,969,1011,d 954,966,990,1029,d 942,984,1029,1041,d 1023,1026,1194,1212,d` },
  { base: 378, bars: `672,738,774,870,u 549,636,741,741,u 513,630,696,735,d 543,582,696,729,u 528,579,648,663,d 645,645,867,918,d 813,864,870,939,d 795,807,870,894,u 759,804,810,846,d 804,843,870,894,u
789,789,798,870,u 747,771,798,831,u 717,720,774,828,u 717,720,759,807,d 741,747,825,840,d 819,825,888,897,d 873,885,894,921,d 831,834,894,903,u 825,834,933,978,d 900,930,960,1050,d
873,888,963,1053,u 612,648,894,900,u 594,648,684,726,d 462,543,684,684,u 330,345,546,555,u 291,315,345,432,u 309,312,795,810,d 708,717,795,813,u 699,720,822,831,d 753,768,822,861,u
726,738,771,798,u 672,702,741,750,u 678,702,771,771,d 702,732,801,813,u 678,714,744,753,u 669,705,717,720,u 498,522,711,723,u 501,513,525,585,u 489,513,606,621,d 219,366,609,714,u
198,207,366,390,u 108,108,210,249,u` },
  { base: 38, bars: `996,1050,1131,1173,u 855,882,1053,1101,u 573,579,887,887,u 123,183,582,816,u 162,186,222,342,d 201,219,267,291,d 264,264,432,507,d 402,426,585,624,d 396,423,594,654,u 414,420,624,624,d
453,453,618,669,u 453,456,510,783,d 381,396,510,540,u 399,399,417,420,u 378,414,426,441,d 408,435,495,558,u 381,393,537,567,d 489,528,597,681,d 564,597,609,657,d 579,606,669,696,d
663,663,735,783,d 705,711,732,780,u 669,693,714,735,u 660,693,696,726,d 639,675,696,717,u 630,675,684,759,d 672,681,849,855,d 795,846,930,945,d 912,927,957,984,d 942,951,981,1017,d
921,978,1056,1065,d 1044,1053,1068,1134,d 930,1005,1047,1098,u 951,1005,1209,1215,d 1098,1170,1206,1212,u 1110,1155,1170,1197,u 1083,1143,1155,1227,u 981,990,1146,1164,u 885,915,984,996,u 903,921,975,1014,d
894,921,1035,1083,d 981,1011,1035,1059,u 957,1008,1023,1089,d 1005,1014,1080,1101,d 1074,1077,1128,1224,d 1017,1032,1125,1137,u 993,1014,1035,1062,u 981,984,1017,1035,u 966,984,1008,1074,d 861,975,1008,1131,u
906,975,996,1068,d 834,846,993,1053,u 669,705,849,858,u 678,708,711,747,d 606,675,711,777,u 597,666,681,792,u 636,672,705,762,d 639,702,786,789,d 759,771,786,852,u 729,729,774,804,u
699,729,750,765,d 723,744,750,786,d 726,744,810,810,d 750,795,804,831,u 744,795,798,807,d 771,792,798,807,d 777,795,840,903,d 762,771,840,843,u 756,771,776,795,d 774,777,807,816,d
792,804,837,840,d 783,819,837,846,u 774,777,822,831,u 768,768,783,831,u 732,750,771,825,u 615,621,753,807,u 621,621,720,729,d 663,714,720,747,d 570,645,714,720,u 579,606,648,744,u
486,498,618,636,u 450,459,501,534,u 414,417,462,495,u 399,417,426,459,d 411,423,465,477,d 441,459,465,495,d 444,456,498,507,d 498,516,555,564,u 387,411,510,522,u 333,411,426,444,d
336,381,426,426,u` },
  { base: -2, bars: `372,375,504,507,u 372,375,423,441,d 345,420,432,456,d 402,429,432,474,d 369,423,435,459,u 321,336,423,438,u 303,330,336,447,d 222,234,333,396,u 183,234,246,258,d 222,231,249,309,u
159,201,234,264,u 189,204,240,267,d 177,237,273,276,d 225,231,273,351,u 165,180,234,252,u 171,180,228,270,d 213,225,228,270,d 219,225,252,309,d 249,249,282,297,d 243,264,279,282,u
255,273,285,456,d 261,285,303,315,d 252,309,312,333,d 261,300,312,348,u 267,282,306,348,u 225,246,285,306,u 204,216,249,258,u 168,171,219,225,u 144,171,195,207,d 156,165,201,231,u
129,165,210,252,d 198,207,327,339,d 285,291,330,339,u` },
];

const rect = (x, top, width, bottom) =>
  bottom > top ? `M${x} ${top}h${width}v${bottom - top}h${-width}z` : "";

let index = 0;
let frame = "";
const fill = { u: "", d: "" };
for (const { base, bars } of segments) {
  for (const bar of bars.split(/\s+/)) {
    const parts = bar.split(",");
    const [high, top, bottom, low] = parts.slice(0, 4).map((v) => Math.round(v / UNITS) + base);
    const x = index * BAR_STEP;
    frame += rect(x, high, 1, top) + rect(x - 1, top, 3, bottom) + rect(x, bottom, 1, low);
    fill[parts[4]] += rect(x, top + 1, 1, bottom - 1);
    index += 1;
  }
}
document.getElementById("bars").setAttribute("d", frame);
document.getElementById("bull").setAttribute("d", fill.u);
document.getElementById("bear").setAttribute("d", fill.d);

// Envelope lines: origin x, origin y, units per pixel, points.
const upper = [
  [-5, 438, 3, "15,280 50,267 72,258 90,247 108,247 125,250 146,250 165,242 200,232 222,228 255,209 268,198 278,175 288,163 310,143 328,127 345,112 362,103 380,94 395,88 418,88 435,84 450,76 470,76 488,79 506,79 525,73 543,70 560,53 578,43 597,35 615,21 634,8"],
  [-5, -102, 1, "233,530 250,522 266,518 285,506 305,488 321,470 340,463 367,457 380,447 390,433"],
  [395, 238, 3, "4,250 25,235 45,219 62,213 82,210 98,205 116,196 133,192 152,190 172,193 188,184 205,177 222,164 240,157 258,148 275,139 297,131 315,129 330,129 350,127 368,136 388,148 395,163 410,177 430,186 447,202 462,208 480,208 498,202 514,204 534,213 552,208 572,210 590,213 607,217 625,227 643,240 660,248 680,267 697,280 715,295 735,315 753,324 772,337 790,340 806,345 823,355 843,362 860,365 878,373 897,378 914,387 932,394 950,404 967,413 987,423 1003,438 1022,448 1040,454 1058,457 1075,463 1092,463 1110,466 1128,460 1147,460 1165,454 1182,446 1200,438 1220,438 1235,442 1253,451 1272,448 1290,451 1311,456 1328,449 1345,445 1362,441 1382,430 1400,414 1418,396 1440,375"],
  [-5, -102, 1, "893,454 906,446 920,440 935,434 945,422"],
  [955, 38, 3, "4,777 13,759 27,738 40,711 50,700 65,685 83,665 95,648 110,632 130,621 148,612 160,595 178,580 196,549 220,527 235,515 250,490 262,462 270,438 286,423 305,403 320,382 345,350 358,328 372,314 390,302 408,293 426,279 445,267 462,253 480,246 498,242 516,236 532,227 548,210 570,200 587,191 605,178 622,160 640,147 658,133 675,113 690,120 710,108 728,98 745,90 765,78 782,72 800,66 818,54 836,43 855,27 872,14 886,0"],
  [-5, -102, 1, "1267,131 1280,118 1290,112"],
  [1295, -2, 3, "12,31 30,31 48,28 66,23 86,18 104,8 110,0"],
];
const lower = [
  [-5, 438, 3, "112,1276 125,1263 143,1246 162,1238 180,1225 200,1212 217,1196 235,1190 252,1183 269,1184 273,1200 340,1200 355,1194 372,1187 392,1180 408,1169 427,1155 445,1150 463,1138 480,1123 500,1107 518,1099 537,1086 555,1086 572,1086 588,1081 608,1078 628,1074 645,1067 663,1063 680,1050 698,1040 715,1030 733,1019 748,1010 762,988 775,968 792,952 808,940 826,926 845,915 862,906 880,900 898,890 916,877 934,882 953,873 970,859 988,845 1005,827 1020,811 1037,796 1053,778 1070,758 1088,745 1106,735 1124,735 1140,728 1160,715 1180,712 1197,707 1213,698 1232,691 1250,680 1268,665 1286,653 1303,641 1322,631 1340,618 1357,603 1372,592 1390,587 1408,586 1428,589"],
  [395, 238, 3, "245,1189 262,1196 280,1201 298,1206 315,1213 333,1214 350,1222 370,1219 388,1215 398,1196 415,1195 433,1198 450,1192 468,1195 487,1213 505,1224 523,1231 541,1240 558,1252 577,1264 594,1273 613,1281 630,1285 648,1288"],
  [-5, -102, 1, "642,771 655,775 667,779 686,791 707,803 735,817 765,827"],
  [775, 378, 3, "12,1052 30,1057 50,1068 68,1068 86,1063 104,1049 122,1045 140,1036 158,1024 176,1010 193,1003 212,995 230,988 248,984 268,982 300,982 318,976 338,976 356,967 375,952 392,935 406,915 425,900 440,885 455,863 470,847 488,832 507,820 524,810 541,800 558,790 578,788 597,773 610,757 630,738 645,718 657,700 665,685 677,667 690,649 708,634 723,618 743,611 760,595 780,580 796,583 810,598 828,588 848,586 866,586 884,583 902,585 920,579 937,567 955,560 973,551 992,542 1010,535 1027,523 1045,507 1065,494 1082,490 1099,486 1117,470 1135,461 1154,455 1172,456 1190,446 1208,440 1222,428 1232,411 1250,403"],
  [-5, -102, 1, "1212,606 1231,596 1255,588 1272,580"],
  [955, 38, 3, "978,1288 996,1277 1015,1266 1031,1252 1048,1233 1064,1215 1078,1198 1092,1180 1107,1160 1124,1147 1142,1139 1160,1128 1178,1118 1196,1108 1214,1095 1232,1080 1250,1068"],
  [1295, -2, 3, "248,1170 266,1152 281,1134 298,1120 317,1102 331,1086 340,1068 355,1056 373,1048 392,1043 409,1034 427,1025 445,1018 463,1005 482,996 492,980 508,961 526,946 546,936 558,918 566,897"],
];

// Points sit on pixel centres so that the thin dashes stay one pixel thick.
const centre = (v) => Math.floor(v) + 0.5;
const points = (band) =>
  band.flatMap(([left, top, units, list]) =>
    list.split(" ").map((pair) => {
      const [x, y] = pair.split(",");
      return `${centre(left + x / units)},${centre(top + y / units)}`;
    })
  ).join(" ");
document.getElementById("upper").setAttribute("points", points(upper));
document.getElementById("lower").setAttribute("points", points(lower));
```
